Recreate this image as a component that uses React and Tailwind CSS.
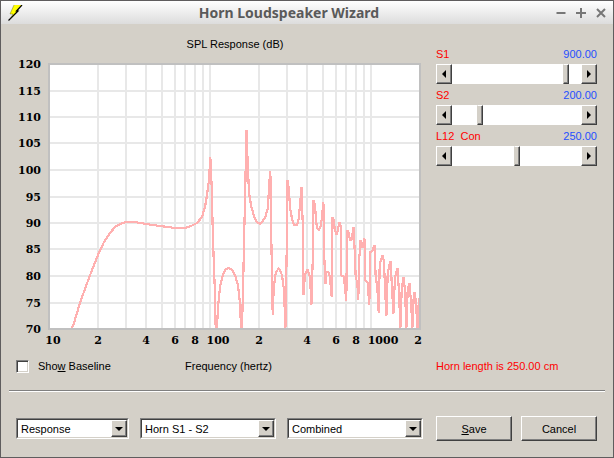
import React, { useState } from 'react';

const GRID_X = [98, 126, 146, 162, 175, 185, 195, 203, 210, 259, 287, 307, 323, 336, 346, 356, 364, 371];

const Y_LABELS = [
    { text: '120', y: 64 },
    { text: '115', y: 91 },
    { text: '110', y: 117 },
    { text: '105', y: 143 },
    { text: '100', y: 170 },
    { text: '95', y: 197 },
    { text: '90', y: 223 },
    { text: '85', y: 249 },
    { text: '80', y: 276 },
    { text: '75', y: 303 },
    { text: '70', y: 329 },
];

const X_LABELS = [
    ['10', 53], ['2', 98], ['4', 146], ['6', 175], ['8', 195], ['100', 218],
    ['2', 259], ['4', 307], ['6', 336], ['8', 356], ['1000', 383], ['2', 418],
];

const RESPONSE = `72,328 74,323 80,303 86,286 92,270 98,255 104,242 110,233 115,227 120,224 126,222 135,222 146,224
160,226 175,228 185,228 191,226 197,223 202,217 205,207 207,195 209,180 210.3,157 211.7,187 212,200 213,240 214,267
214.7,287 215.7,328 217,328 218,307 220,287 223,274 226,269 229,268 232,270 235,275 238,285 240,303 241,328
242,328 243.3,277 244.3,230 245.3,188 246.4,130 247.7,163 249,193 251.3,207 254.7,218 257,222 260,224 262,222
265,218 268,208 269,187 270.3,171 271,200 271.4,243 272.7,315 273.7,288 275.7,273 278.7,268 282,275 284,290
285.4,328 286.7,250 287.4,180 289,190 290,208 292.3,220 294,225 297,225 298.5,220 300.3,202 301.4,187 302.7,223
303.4,295 305,275 307.4,269 310,277 311.4,305 313,250 313.4,200 315,205 316,220 317,228 319,230 320.7,226 322,217
323.4,202 324,250 325.4,284 326.3,272 328.7,272 330,278 331.7,297 332,240 332.4,217 334,221 334.7,230 336.7,235
338,229 339.4,222 341,227 341.3,275 344,277 346.3,301 347,240 347.4,230 348.7,233 350,240 351.5,240 352.4,235
353.4,227 354.7,250 355.7,278 357.3,282 358.3,300 359,262 360.6,240 361.5,247 363,246 364.4,238 365.3,280
367.7,283 369.3,305 370.3,252 372.3,251 374.4,245 375.7,277 377.3,287 378.7,313 379.7,265 382.4,255 384,262
385,288 386.4,316 387.7,273 390.4,261 392,287 393.4,314 395,277 397.4,268 399,292 400.4,328 401.7,290 403.4,277
405,290 406.4,328 407.7,290 409.4,283 411,302 412.4,328 413.7,297 414.7,292 416,303 417.4,328 419,298`;

const RAISED = 'border border-t-white border-l-white border-r-[#404040] border-b-[#404040] bg-[#d4d0c8] shadow-[inset_-1px_-1px_0_#808080]';

const TitleBar = () => (
    <header className="flex h-[23px] items-center bg-linear-to-b from-white to-[#dcdcdc] px-[7px]">
        <svg className="h-4 w-4" viewBox="0 0 16 16">
            <path d="M6 0H13.5L9 6H10L3 13L5 9H2Z" fill="#ffff00" />
            <path d="M14 0L8.5 6H10L0.5 15.5" fill="none" stroke="#000" strokeWidth="1.2" />
            <path d="M6 0L2 9H5L2.5 13.5" fill="none" stroke="#55550a" strokeWidth="0.4" />
        </svg>
        <h1 className="flex-1 pr-0.5 text-center font-['Noto_Sans',sans-serif] text-[14px] leading-5 font-bold text-[#5a5a5a]">
            Horn Loudspeaker Wizard
        </h1>
        <div className="flex gap-2.5 text-[#777]">
            <button aria-label="Minimize" className="h-2.5 w-2.5">
                <svg viewBox="0 0 10 10" stroke="currentColor" strokeWidth="2"><path d="M0.5 5H9.5" /></svg>
            </button>
            <button aria-label="Maximize" className="h-2.5 w-2.5">
                <svg viewBox="0 0 10 10" stroke="currentColor" strokeWidth="2"><path d="M0 5H10M5 0V10" /></svg>
            </button>
            <button aria-label="Close" className="h-2.5 w-2.5">
                <svg viewBox="0 0 10 10" stroke="currentColor" strokeWidth="2"><path d="M1 1L9 9M9 1L1 9" /></svg>
            </button>
        </div>
    </header>
);

const Chart = () => (
    <svg className="block h-auto w-full" viewBox="16 56 410 292" role="img" aria-label="SPL Response (dB)">
        <rect x="49" y="64" width="371" height="265" fill="#fff" />
        <g stroke="#e8e8e8" strokeWidth="2">
            {GRID_X.map((x) => <line key={x} x1={x} x2={x} y1="64" y2="329" />)}
            {Y_LABELS.slice(1, -1).map(({ y }) => <line key={y} x1="49" x2="420" y1={y} y2={y} />)}
        </g>
        <polyline
            points={RESPONSE}
            fill="none"
            stroke="#ffb0b0"
            strokeWidth="2.2"
            strokeLinejoin="bevel"
            shapeRendering="crispEdges"
        />
        <rect x="49" y="64" width="371" height="265" fill="none" stroke="#c0c0c0" strokeWidth="2" />
        <g className="font-['DejaVu_Serif',serif] text-[11px] font-bold" fill="#000">
            {Y_LABELS.map(({ text, y }) => <text key={text} x="41" y={y + 4} textAnchor="end">{text}</text>)}
            {X_LABELS.map(([text, x]) => <text key={x} x={x} y="344" textAnchor="middle">{text}</text>)}
        </g>
    </svg>
);

const ArrowButton = ({ label, path, onClick }) => (
    <button aria-label={label} onClick={onClick} className={`flex h-5 w-4 items-center justify-center ${RAISED}`}>
        <svg className="h-2 w-2" viewBox="0 0 8 8"><path d={path} fill="#000" /></svg>
    </button>
);

const ScrollSlider = ({ id, name, max, value, onChange }) => (
    <div>
        <div className="flex h-[21px] items-center justify-between">
            <label htmlFor={id} className="whitespace-pre text-[#ff0000]">{name}</label>
            <output htmlFor={id} className="text-[#1f4fff]">{value.toFixed(2)}</output>
        </div>
        <div className="flex">
            <ArrowButton label={`Decrease ${name}`} path="M6 0V8L2 4Z" onClick={() => onChange(Math.max(0, value - 1))} />
            <input
                id={id}
                type="range"
                min="0"
                max={max}
                value={value}
                onChange={(e) => onChange(Number(e.target.value))}
                className="h-5 w-0 flex-1 appearance-none bg-white [&::-webkit-slider-thumb]:h-5 [&::-webkit-slider-thumb]:w-1.5 [&::-webkit-slider-thumb]:appearance-none [&::-webkit-slider-thumb]:border [&::-webkit-slider-thumb]:border-t-white [&::-webkit-slider-thumb]:border-r-[#404040] [&::-webkit-slider-thumb]:border-b-[#404040] [&::-webkit-slider-thumb]:border-l-[#d4d0c8] [&::-webkit-slider-thumb]:bg-[#d4d0c8] [&::-webkit-slider-thumb]:shadow-[inset_-1px_-1px_0_#808080]"
            />
            <ArrowButton label={`Increase ${name}`} path="M2 0V8L6 4Z" onClick={() => onChange(Math.min(max, value + 1))} />
        </div>
    </div>
);

const DropDown = ({ label, options, className }) => (
    <div className={`relative h-[21px] border border-t-[#808080] border-l-[#808080] border-r-white border-b-white ${className}`}>
        <select
            aria-label={label}
            className="block h-full w-full appearance-none border border-t-[#404040] border-l-[#404040] border-r-[#d4d0c8] border-b-[#d4d0c8] bg-white pl-[3px] leading-4 outline-none"
        >
            {options.map((option) => <option key={option}>{option}</option>)}
        </select>
        <span className={`pointer-events-none absolute inset-y-px right-px flex w-4 items-center justify-center ${RAISED}`}>
            <svg className="h-1 w-2" viewBox="0 0 8 4"><path d="M0 0H8L4 4Z" fill="#000" /></svg>
        </span>
    </div>
);

const App = () => {
    const [s1, setS1] = useState(900);
    const [s2, setS2] = useState(200);
    const [length, setLength] = useState(250);
    const [baseline, setBaseline] = useState(false);

    return (
        <div className="border border-[#5f5d5e] bg-[#d4d0c8] font-['Liberation_Sans',sans-serif] text-[11px] leading-4 text-black">
            <TitleBar />
            <main className="flex gap-2.5 pr-4 pl-[15px]">
                <section className="min-w-0 flex-1">
                    <h2 className="flex h-8 items-center justify-center pt-2 pl-7 text-[11px]">SPL Response (dB)</h2>
                    <Chart />
                    <div className="flex h-9 items-center">
                        <label className="flex w-[169px] items-center gap-[9px]">
                            <input
                                type="checkbox"
                                checked={baseline}
                                onChange={(e) => setBaseline(e.target.checked)}
                                className="h-[13px] w-[13px] appearance-none border border-t-[#808080] border-l-[#808080] border-r-white border-b-white bg-white shadow-[inset_1px_1px_0_#404040,inset_-1px_-1px_0_#d4d0c8] checked:bg-black"
                            />
                            <span>Sho<u>w</u> Baseline</span>
                        </label>
                        <span>Frequency (hertz)</span>
                    </div>
                </section>
                <aside className="flex w-[161px] flex-col justify-between pt-[19px]">
                    <div>
                        <ScrollSlider id="s1" name="S1" max={1000} value={s1} onChange={setS1} />
                        <ScrollSlider id="s2" name="S2" max={1000} value={s2} onChange={setS2} />
                        <ScrollSlider id="l12" name="L12  Con" max={500} value={length} onChange={setLength} />
                    </div>
                    <p className="flex h-9 items-center text-[#ff0000]">Horn length is {length.toFixed(2)} cm</p>
                </aside>
            </main>
            <hr className="mx-2 mt-1.5 h-0.5 border-t border-b border-t-[#808080] border-b-white" />
            <footer className="flex items-center pt-6 pr-4 pb-4 pl-[15px]">
                <div className="flex flex-1 gap-[11px]">
                    <DropDown label="Chart" options={['Response']} className="w-[113px]" />
                    <DropDown label="Segment" options={['Horn S1 - S2']} className="w-[136px]" />
                    <DropDown label="Output" options={['Combined']} className="w-[136px]" />
                </div>
                <div className="flex gap-[9px]">
                    <button className={`h-[25px] w-[76px] ${RAISED}`}><u>S</u>ave</button>
                    <button className={`h-[25px] w-[76px] ${RAISED}`}>Cancel</button>
                </div>
            </footer>
        </div>
    );
};

export default App;
